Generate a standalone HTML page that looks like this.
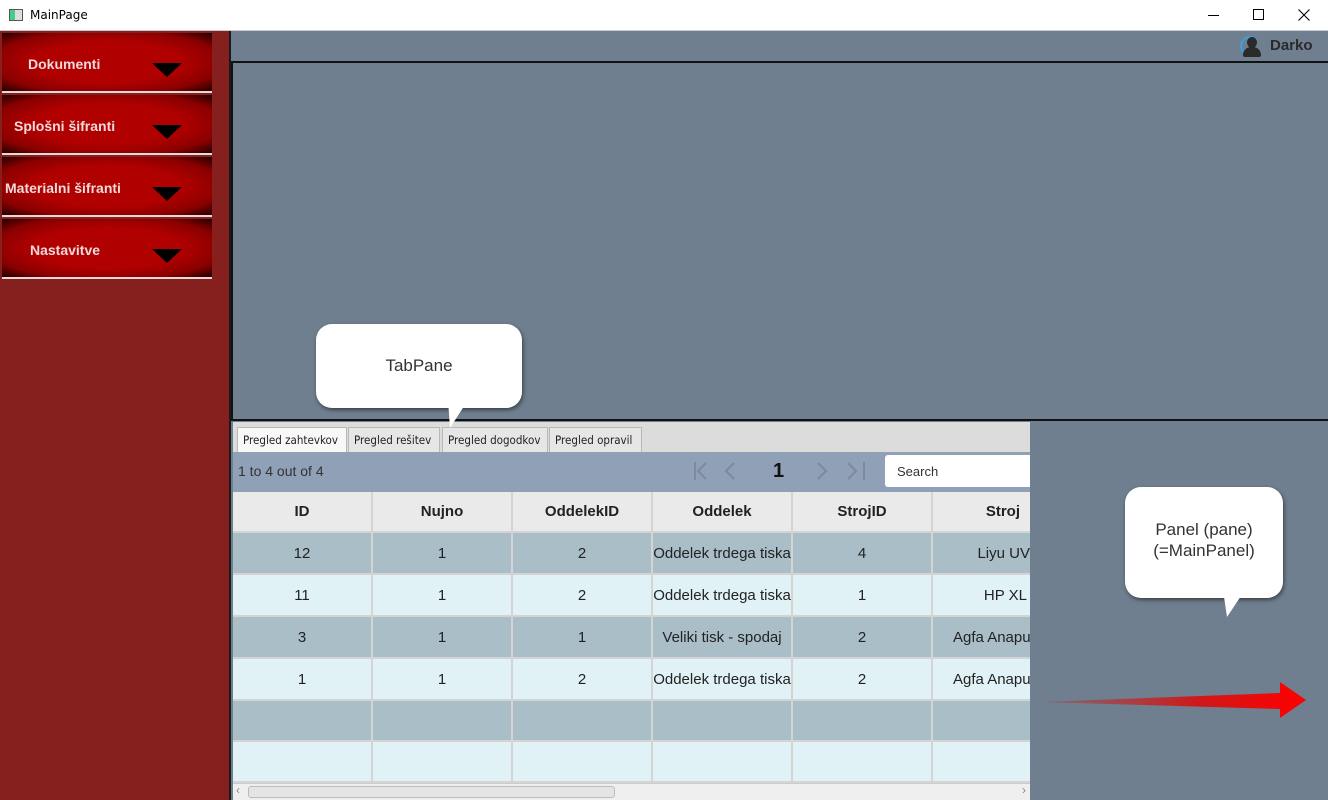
<!DOCTYPE html>
<html><head><meta charset="utf-8"><style>
*{margin:0;padding:0;box-sizing:border-box}
body{width:1328px;height:800px;position:relative;overflow:hidden;font-family:"Liberation Sans",sans-serif;background:#6f7f8f}
.abs{position:absolute}
.btn{position:absolute;left:2px;width:210px;height:60px;background:radial-gradient(ellipse at center,#b00000 50%,#8a0000 78%,#200000 100%);border-bottom:2px solid #e8d8d8;color:#f3dada;font-weight:bold;font-size:14px;display:flex;align-items:center}
.btn .t{position:absolute;top:23px}
.btn .tri{position:absolute;left:150px;top:30px;width:0;height:0;border-left:15px solid transparent;border-right:15px solid transparent;border-top:14px solid #000}
.tab{position:absolute;top:427px;height:25px;border:1px solid #b8b8b8;border-bottom:none;background:#e6e6e6;font-size:11.5px;color:#222;padding:5px 0 0 5px;font-family:"DejaVu Sans Condensed","Liberation Sans",sans-serif}
.cell{position:absolute;height:100%;border-right:2px solid #d4d4d4;display:flex;align-items:center;justify-content:center;font-size:15px;color:#222}
.row{position:absolute;left:233px;width:797px;border-bottom:2px solid #d4d4d4}
.bub{position:absolute;background:#fff;border-radius:16px;box-shadow:1px 2px 4px rgba(0,0,0,.5);color:#333;font-size:17px;text-align:center}
</style></head><body>
<div class="abs" style="left:0;top:0;width:1328px;height:31px;background:#fff;border-bottom:1px solid #ccc"></div>
<div class="abs" style="left:9px;top:9px;width:14px;height:12px;border:1px solid #555;background:linear-gradient(90deg,#4c8 0 40%,#ddd 40%)"></div>
<div class="abs" style="left:30px;top:8px;font-size:12px;color:#000;font-family:'DejaVu Sans',sans-serif">MainPage</div>
<div class="abs" style="left:1208px;top:15px;width:11px;height:1px;background:#000"></div>
<div class="abs" style="left:1253px;top:9px;width:11px;height:11px;border:1px solid #000"></div>
<svg class="abs" style="left:1298px;top:9px" width="12" height="12"><path d="M0.5 0.5L11.5 11.5M11.5 0.5L0.5 11.5" stroke="#000" stroke-width="1.1"/></svg>

<div class="abs" style="left:0;top:31px;width:231px;height:769px;background:#85201e;border-right:2px solid #1a1a1a"></div>
<div class="btn" style="top:33px"><span class="t" style="left:26px">Dokumenti</span><span class="tri"></span></div>
<div class="btn" style="top:95px"><span class="t" style="left:12px">Splošni šifranti</span><span class="tri"></span></div>
<div class="btn" style="top:157px"><span class="t" style="left:3px">Materialni šifranti</span><span class="tri"></span></div>
<div class="btn" style="top:219px"><span class="t" style="left:28px">Nastavitve</span><span class="tri"></span></div>

<div class="abs" style="left:1240px;top:36px;width:20px;height:20px;border-radius:50%;border:2px solid #3aa0e0;border-right-color:transparent"></div>
<div class="abs" style="left:1247px;top:37px;width:10px;height:11px;border-radius:50%;background:#2a2a2a"></div>
<div class="abs" style="left:1243px;top:47px;width:18px;height:10px;border-radius:8px 8px 2px 2px;background:#2a2a2a"></div>
<div class="abs" style="left:1270px;top:37px;font-size:15px;font-weight:bold;color:#2a2a2a">Darko</div>

<div class="abs" style="left:231px;top:61px;width:1097px;height:360px;border:2px solid #111;border-right:none"></div>

<div class="abs" style="left:233px;top:422px;width:797px;height:30px;background:#dcdcdc"></div>
<div class="tab" style="left:237px;width:110px;background:#f8f8f8">Pregled zahtevkov</div>
<div class="tab" style="left:348px;width:92px">Pregled rešitev</div>
<div class="tab" style="left:442px;width:106px">Pregled dogodkov</div>
<div class="tab" style="left:549px;width:93px">Pregled opravil</div>

<div class="abs" style="left:233px;top:452px;width:797px;height:40px;background:#8fa0b7"></div>
<div class="abs" style="left:238px;top:463px;font-size:14px;color:#333">1 to 4 out of 4</div>
<svg class="abs" style="left:690px;top:460px" width="180" height="22" fill="none" stroke="#7d8a9c" stroke-width="2">
<path d="M5 2V20M16 3L8 11L16 19"/><path d="M44 3L36 11L44 19"/>
<path d="M128 3L136 11L128 19"/><path d="M158 3L166 11L158 19M174 2V20"/></svg>
<div class="abs" style="left:773px;top:460px;font-size:20px;font-weight:bold;color:#111">1</div>
<div class="abs" style="left:885px;top:455px;width:145px;height:32px;background:#fff;border-radius:3px 0 0 3px;font-size:13px;color:#333;padding:9px 0 0 12px">Search</div>

<div class="row" style="top:492px;height:41px;background:#eaeaea">
<div class="cell" style="left:0;width:140px;font-weight:bold">ID</div><div class="cell" style="left:140px;width:140px;font-weight:bold">Nujno</div><div class="cell" style="left:280px;width:140px;font-weight:bold">OddelekID</div><div class="cell" style="left:420px;width:140px;font-weight:bold">Oddelek</div><div class="cell" style="left:560px;width:140px;font-weight:bold">StrojID</div><div class="cell" style="left:700px;width:97px;font-weight:bold;justify-content:flex-end;padding-right:10px;border:none">Stroj</div></div>
<div class="row" style="top:533px;height:42px;background:#a9bec7">
<div class="cell" style="left:0;width:140px">12</div><div class="cell" style="left:140px;width:140px">1</div><div class="cell" style="left:280px;width:140px">2</div><div class="cell" style="left:420px;width:140px;white-space:nowrap">Oddelek trdega tiska</div><div class="cell" style="left:560px;width:140px">4</div><div class="cell" style="left:700px;width:97px;justify-content:flex-end;border:none">Liyu UV</div></div>
<div class="row" style="top:575px;height:42px;background:#e1f2f7">
<div class="cell" style="left:0;width:140px">11</div><div class="cell" style="left:140px;width:140px">1</div><div class="cell" style="left:280px;width:140px">2</div><div class="cell" style="left:420px;width:140px;white-space:nowrap">Oddelek trdega tiska</div><div class="cell" style="left:560px;width:140px">1</div><div class="cell" style="left:700px;width:97px;justify-content:flex-end;padding-right:3px;border:none">HP XL</div></div>
<div class="row" style="top:617px;height:42px;background:#a9bec7">
<div class="cell" style="left:0;width:140px">3</div><div class="cell" style="left:140px;width:140px">1</div><div class="cell" style="left:280px;width:140px">1</div><div class="cell" style="left:420px;width:140px;white-space:nowrap">Veliki tisk - spodaj</div><div class="cell" style="left:560px;width:140px">2</div><div class="cell" style="left:700px;width:97px;justify-content:flex-start;padding-left:20px;white-space:nowrap;overflow:hidden;border:none">Agfa Anapurna</div></div>
<div class="row" style="top:659px;height:42px;background:#e1f2f7">
<div class="cell" style="left:0;width:140px">1</div><div class="cell" style="left:140px;width:140px">1</div><div class="cell" style="left:280px;width:140px">2</div><div class="cell" style="left:420px;width:140px;white-space:nowrap">Oddelek trdega tiska</div><div class="cell" style="left:560px;width:140px">2</div><div class="cell" style="left:700px;width:97px;justify-content:flex-start;padding-left:20px;white-space:nowrap;overflow:hidden;border:none">Agfa Anapurna</div></div>
<div class="row" style="top:701px;height:41px;background:#a9bec7">
<div class="cell" style="left:0;width:140px"></div><div class="cell" style="left:140px;width:140px"></div><div class="cell" style="left:280px;width:140px"></div><div class="cell" style="left:420px;width:140px"></div><div class="cell" style="left:560px;width:140px"></div></div>
<div class="row" style="top:742px;height:41px;background:#e1f2f7">
<div class="cell" style="left:0;width:140px"></div><div class="cell" style="left:140px;width:140px"></div><div class="cell" style="left:280px;width:140px"></div><div class="cell" style="left:420px;width:140px"></div><div class="cell" style="left:560px;width:140px"></div></div>
<div class="abs" style="left:233px;top:783px;width:797px;height:17px;background:#efefef;border-top:1px solid #ccc"></div>
<div class="abs" style="left:248px;top:786px;width:367px;height:12px;background:#e4e4e4;border:1px solid #bbb;border-radius:3px"></div>
<div class="abs" style="left:236px;top:783px;font-size:12px;color:#888">‹</div>
<div class="abs" style="left:1022px;top:783px;font-size:12px;color:#888">›</div>

<div class="bub" style="left:316px;top:324px;width:206px;height:84px;line-height:84px">TabPane</div>
<svg class="abs" style="left:440px;top:400px" width="30" height="30"><polygon points="8,0 28,0 10,28" fill="#fff"/></svg>
<div class="bub" style="left:1125px;top:487px;width:158px;height:111px;padding-top:32px;line-height:21px">Panel (pane)<br>(=MainPanel)</div>
<svg class="abs" style="left:1215px;top:590px" width="40" height="30"><polygon points="8,0 30,0 12,27" fill="#fff"/></svg>

<svg class="abs" style="left:1035px;top:678px" width="280" height="44">
<defs><linearGradient id="g" x1="0" x2="1"><stop offset="0" stop-color="#b03030" stop-opacity=".3"/><stop offset=".6" stop-color="#d01818"/><stop offset="1" stop-color="#f00"/></linearGradient></defs>
<polygon points="5,24 245,15 245,4 271,22 245,40 245,31" fill="url(#g)"/></svg>
</body></html>
